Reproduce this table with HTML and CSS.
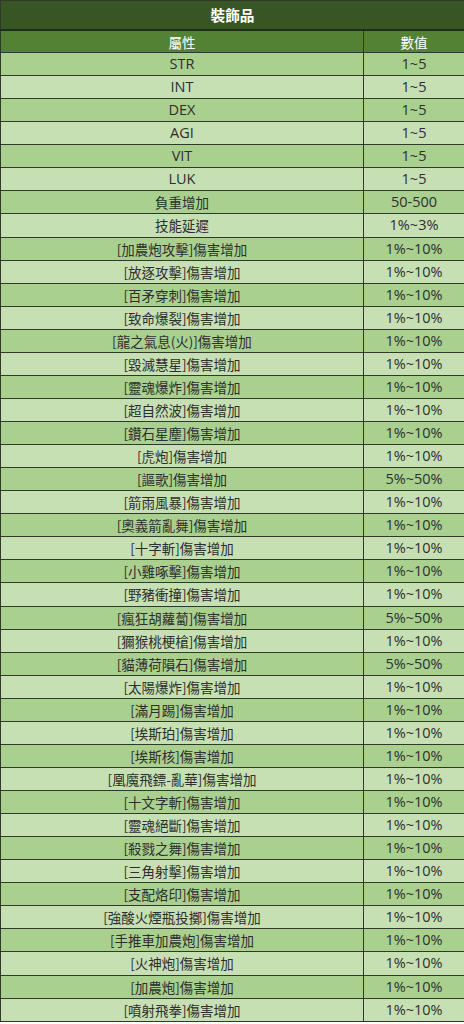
FILE: index.html
```html
<!DOCTYPE html>
<html lang="zh-Hant">
<head>
<meta charset="utf-8">
<link rel="stylesheet" href="styles.css">
</head>
<body>
<table class="tbl">
  <colgroup><col class="c1"><col class="c2"></colgroup>
  <thead>
    <tr class="title"><th colspan="2">裝飾品</th></tr>
    <tr class="head"><th>屬性</th><th>數值</th></tr>
  </thead>
  <tbody>
    <tr><td class="lat">STR</td><td>1~5</td></tr>
    <tr><td class="lat">INT</td><td>1~5</td></tr>
    <tr><td class="lat">DEX</td><td>1~5</td></tr>
    <tr><td class="lat">AGI</td><td>1~5</td></tr>
    <tr><td class="lat">VIT</td><td>1~5</td></tr>
    <tr><td class="lat">LUK</td><td>1~5</td></tr>
    <tr><td>負重增加</td><td>50-500</td></tr>
    <tr><td>技能延遲</td><td>1%~3%</td></tr>
    <tr><td>[加農炮攻擊]傷害增加</td><td>1%~10%</td></tr>
    <tr><td>[放逐攻擊]傷害增加</td><td>1%~10%</td></tr>
    <tr><td>[百矛穿刺]傷害增加</td><td>1%~10%</td></tr>
    <tr><td>[致命爆裂]傷害增加</td><td>1%~10%</td></tr>
    <tr><td>[龍之氣息(火)]傷害增加</td><td>1%~10%</td></tr>
    <tr><td>[毀滅慧星]傷害增加</td><td>1%~10%</td></tr>
    <tr><td>[靈魂爆炸]傷害增加</td><td>1%~10%</td></tr>
    <tr><td>[超自然波]傷害增加</td><td>1%~10%</td></tr>
    <tr><td>[鑽石星塵]傷害增加</td><td>1%~10%</td></tr>
    <tr><td>[虎炮]傷害增加</td><td>1%~10%</td></tr>
    <tr><td>[謳歌]傷害增加</td><td>5%~50%</td></tr>
    <tr><td>[箭雨風暴]傷害增加</td><td>1%~10%</td></tr>
    <tr><td>[奧義箭亂舞]傷害增加</td><td>1%~10%</td></tr>
    <tr><td>[十字斬]傷害增加</td><td>1%~10%</td></tr>
    <tr><td>[小雞啄擊]傷害增加</td><td>1%~10%</td></tr>
    <tr><td>[野豬衝撞]傷害增加</td><td>1%~10%</td></tr>
    <tr><td>[瘋狂胡蘿蔔]傷害增加</td><td>5%~50%</td></tr>
    <tr><td>[獮猴桃梗槍]傷害增加</td><td>1%~10%</td></tr>
    <tr><td>[貓薄荷隕石]傷害增加</td><td>5%~50%</td></tr>
    <tr><td>[太陽爆炸]傷害增加</td><td>1%~10%</td></tr>
    <tr><td>[滿月踢]傷害增加</td><td>1%~10%</td></tr>
    <tr><td>[埃斯珀]傷害增加</td><td>1%~10%</td></tr>
    <tr><td>[埃斯核]傷害增加</td><td>1%~10%</td></tr>
    <tr><td>[凰魔飛鏢-亂華]傷害增加</td><td>1%~10%</td></tr>
    <tr><td>[十文字斬]傷害增加</td><td>1%~10%</td></tr>
    <tr><td>[靈魂絕斷]傷害增加</td><td>1%~10%</td></tr>
    <tr><td>[殺戮之舞]傷害增加</td><td>1%~10%</td></tr>
    <tr><td>[三角射擊]傷害增加</td><td>1%~10%</td></tr>
    <tr><td>[支配烙印]傷害增加</td><td>1%~10%</td></tr>
    <tr><td>[強酸火煙瓶投擲]傷害增加</td><td>1%~10%</td></tr>
    <tr><td>[手推車加農炮]傷害增加</td><td>1%~10%</td></tr>
    <tr><td>[火神炮]傷害增加</td><td>1%~10%</td></tr>
    <tr><td>[加農炮]傷害增加</td><td>1%~10%</td></tr>
    <tr><td>[噴射飛拳]傷害增加</td><td>1%~10%</td></tr>
  </tbody>
</table>
</body>
</html>
```

FILE: styles.css
```css
html, body {
  margin: 0;
  padding: 0;
  background: #ffffff;
}
.tbl {
  width: 464px;
  border-collapse: collapse;
  table-layout: fixed;
  font-family: "Noto Sans CJK TC", sans-serif;
  font-size: 13.5px;
  color: #2e2e2e;
}
.c1 { width: 363px; }
.c2 { width: 101px; }
.tbl th, .tbl td {
  border: 1px solid #2f3a28;
  padding: 0;
  text-align: center;
  vertical-align: middle;
  line-height: 18px;
  font-weight: normal;
}
.title th {
  height: 28px;
  background: #375623;
  color: #ffffff;
  font-weight: bold;
  font-size: 14.67px;
  border-bottom: 2px solid #1f2e16;
}
.head th {
  height: 21px;
  background: #548235;
  color: #ffffff;
}
.tbl td {
  height: 22.07px;
}
.tbl td + td,
.tbl td.lat {
  font-family: "Open Sans", sans-serif;
  font-size: 14.5px;
}
.tbl tbody tr:nth-child(odd) td { background: #a9d08e; }
.tbl tbody tr:nth-child(even) td { background: #c6e0b4; }
```
